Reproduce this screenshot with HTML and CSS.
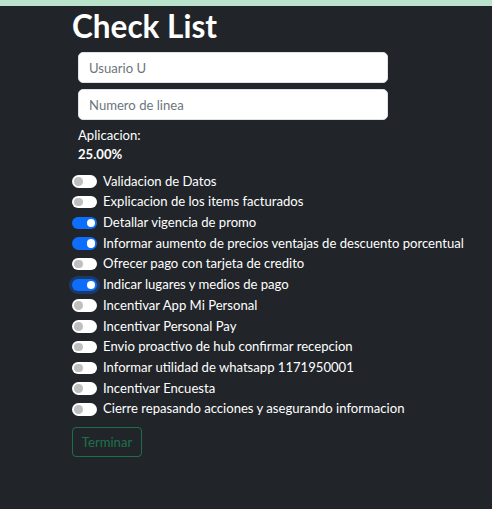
FILE: index.html
```html
<!DOCTYPE html>
<html lang="es">
<head>
<meta charset="utf-8">
<title>Check List</title>
<link rel="stylesheet" href="styles.css">
</head>
<body>
<div class="topbar"></div>
<main class="container">
  <h1 class="title">Check List</h1>
  <div class="fields">
    <input class="field" type="text" placeholder="Usuario U">
    <input class="field" type="text" placeholder="Numero de linea">
    <div class="score">
      <div class="score-label">Aplicacion:</div>
      <div class="score-value">25.00%</div>
    </div>
  </div>
  <ul class="checks">
    <li class="check"><span class="switch"></span><span>Validacion de Datos</span></li>
    <li class="check"><span class="switch"></span><span>Explicacion de los items facturados</span></li>
    <li class="check"><span class="switch on"></span><span>Detallar vigencia de promo</span></li>
    <li class="check"><span class="switch on"></span><span>Informar aumento de precios ventajas de descuento porcentual</span></li>
    <li class="check"><span class="switch"></span><span>Ofrecer pago con tarjeta de credito</span></li>
    <li class="check"><span class="switch on focus"></span><span>Indicar lugares y medios de pago</span></li>
    <li class="check"><span class="switch"></span><span>Incentivar App Mi Personal</span></li>
    <li class="check"><span class="switch"></span><span>Incentivar Personal Pay</span></li>
    <li class="check"><span class="switch"></span><span>Envio proactivo de hub confirmar recepcion</span></li>
    <li class="check"><span class="switch"></span><span>Informar utilidad de whatsapp 1171950001</span></li>
    <li class="check"><span class="switch"></span><span>Incentivar Encuesta</span></li>
    <li class="check"><span class="switch"></span><span>Cierre repasando acciones y asegurando informacion</span></li>
  </ul>
  <button class="btn" type="button">Terminar</button>
</main>
</body>
</html>
```

FILE: styles.css
```css
html, body {
  margin: 0;
  padding: 0;
  background: #212529;
  height: 100%;
}
body {
  font-family: Lato, "Noto Sans", sans-serif;
  color: #ffffff;
  font-size: 13.1px;
  line-height: 1.5;
}
.topbar {
  height: 6px;
  background: #bae3cc;
}
.container {
  padding-left: 72px;
}
.title {
  margin: 0;
  font-size: 31.5px;
  font-weight: 700;
  line-height: 40px;
  height: 46px;
}
.fields {
  margin-left: 6px;
  display: flex;
  flex-direction: column;
  gap: 6px;
}
.field {
  box-sizing: border-box;
  width: 310px;
  height: 31px;
  border: 1px solid #dee2e6;
  border-radius: 5px;
  background: #fff;
  padding: 0 10px;
  font-family: inherit;
  font-size: 13.1px;
  color: #212529;
}
.field::placeholder {
  color: #6c757d;
}
.score-label, .score-value {
  line-height: 19px;
}
.score-value {
  font-weight: 700;
}
.checks {
  list-style: none;
  margin: 7px 0 0;
  padding: 0;
}
.check {
  display: flex;
  align-items: center;
  gap: 6px;
  height: 20.73px;
  white-space: nowrap;
}
.switch {
  box-sizing: border-box;
  width: 25px;
  height: 12.5px;
  border-radius: 7px;
  background: #fff;
  position: relative;
  flex: none;
}
.switch::after {
  content: "";
  position: absolute;
  top: 2px;
  left: 2px;
  width: 8.5px;
  height: 8.5px;
  border-radius: 50%;
  background: #bfbfbf;
}
.switch.on {
  background: #0d6efd;
}
.switch.on::after {
  left: auto;
  right: 2px;
  background: #fff;
}
.switch.focus {
  box-shadow: 0 0 0 3px rgba(13, 110, 253, 0.3);
}
.btn {
  margin-top: 7px;
  box-sizing: border-box;
  width: 70px;
  height: 30px;
  background: transparent;
  border: 1px solid rgba(25, 135, 84, 0.75);
  border-radius: 4px;
  color: rgba(25, 135, 84, 0.8);
  font-family: inherit;
  font-size: 13.1px;
  padding: 0;
}
```
